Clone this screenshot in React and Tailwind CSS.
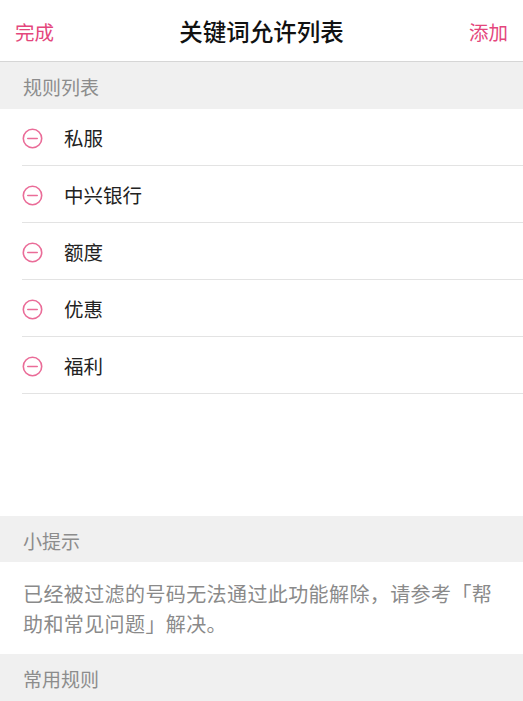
import React from 'react';

const rules = ['私服', '中兴银行', '额度', '优惠', '福利'];

const font = { fontFamily: '"Noto Sans CJK SC", "Noto Sans", sans-serif' };

const MinusIcon = () => (
  <svg width="21" height="21" viewBox="0 0 21 21" className="shrink-0">
    <circle cx="10.5" cy="10.5" r="9.2" fill="none" stroke="#ea6c98" strokeWidth="1.6" />
    <line x1="5.8" y1="10.5" x2="15.2" y2="10.5" stroke="#ea6c98" strokeWidth="1.6" strokeLinecap="round" />
  </svg>
);

const SectionHeader = ({ title }) => (
  <div className="h-[48px] flex items-center bg-[#f0f0f0] pl-[23px] pt-[2px] text-[19px] text-[#8c8c8c] leading-none">
    {title}
  </div>
);

export default function App() {
  return (
    <div style={font} className="w-[523px] h-[701px] overflow-hidden bg-white flex flex-col">
      {/* nav bar */}
      <div className="h-[62px] shrink-0 flex items-center justify-between px-[15px] border-b border-[#d6d6d6] pt-[2px]">
        <button className="text-[19.5px] text-[#e4467c] leading-none">完成</button>
        <h1 className="text-[23.5px] font-medium text-[#111] leading-none">关键词允许列表</h1>
        <button className="text-[19.5px] text-[#e4467c] leading-none">添加</button>
      </div>

      <SectionHeader title="规则列表" />

      <div className="h-[407px] shrink-0">
        {rules.map((r) => (
          <div key={r} className="h-[57px] flex items-center pl-[22px]">
            <div className="h-full flex-1 flex items-center border-b border-[#e3e3e3] pt-[3px]">
              <MinusIcon />
              <span className="ml-[21px] text-[19.5px] text-[#222] leading-none">{r}</span>
            </div>
          </div>
        ))}
      </div>

      <SectionHeader title="小提示" />

      <div className="pl-[23px] pr-[20px] pt-[17px] pb-[15px] text-[20px] leading-[30px] tracking-[0.4px] text-[#8a8a8a]">
        已经被过滤的号码无法通过此功能解除，请参考「帮助和常见问题」解决。
      </div>

      <SectionHeader title="常用规则" />
      <div className="flex-1 bg-[#f0f0f0]" />
    </div>
  );
}
